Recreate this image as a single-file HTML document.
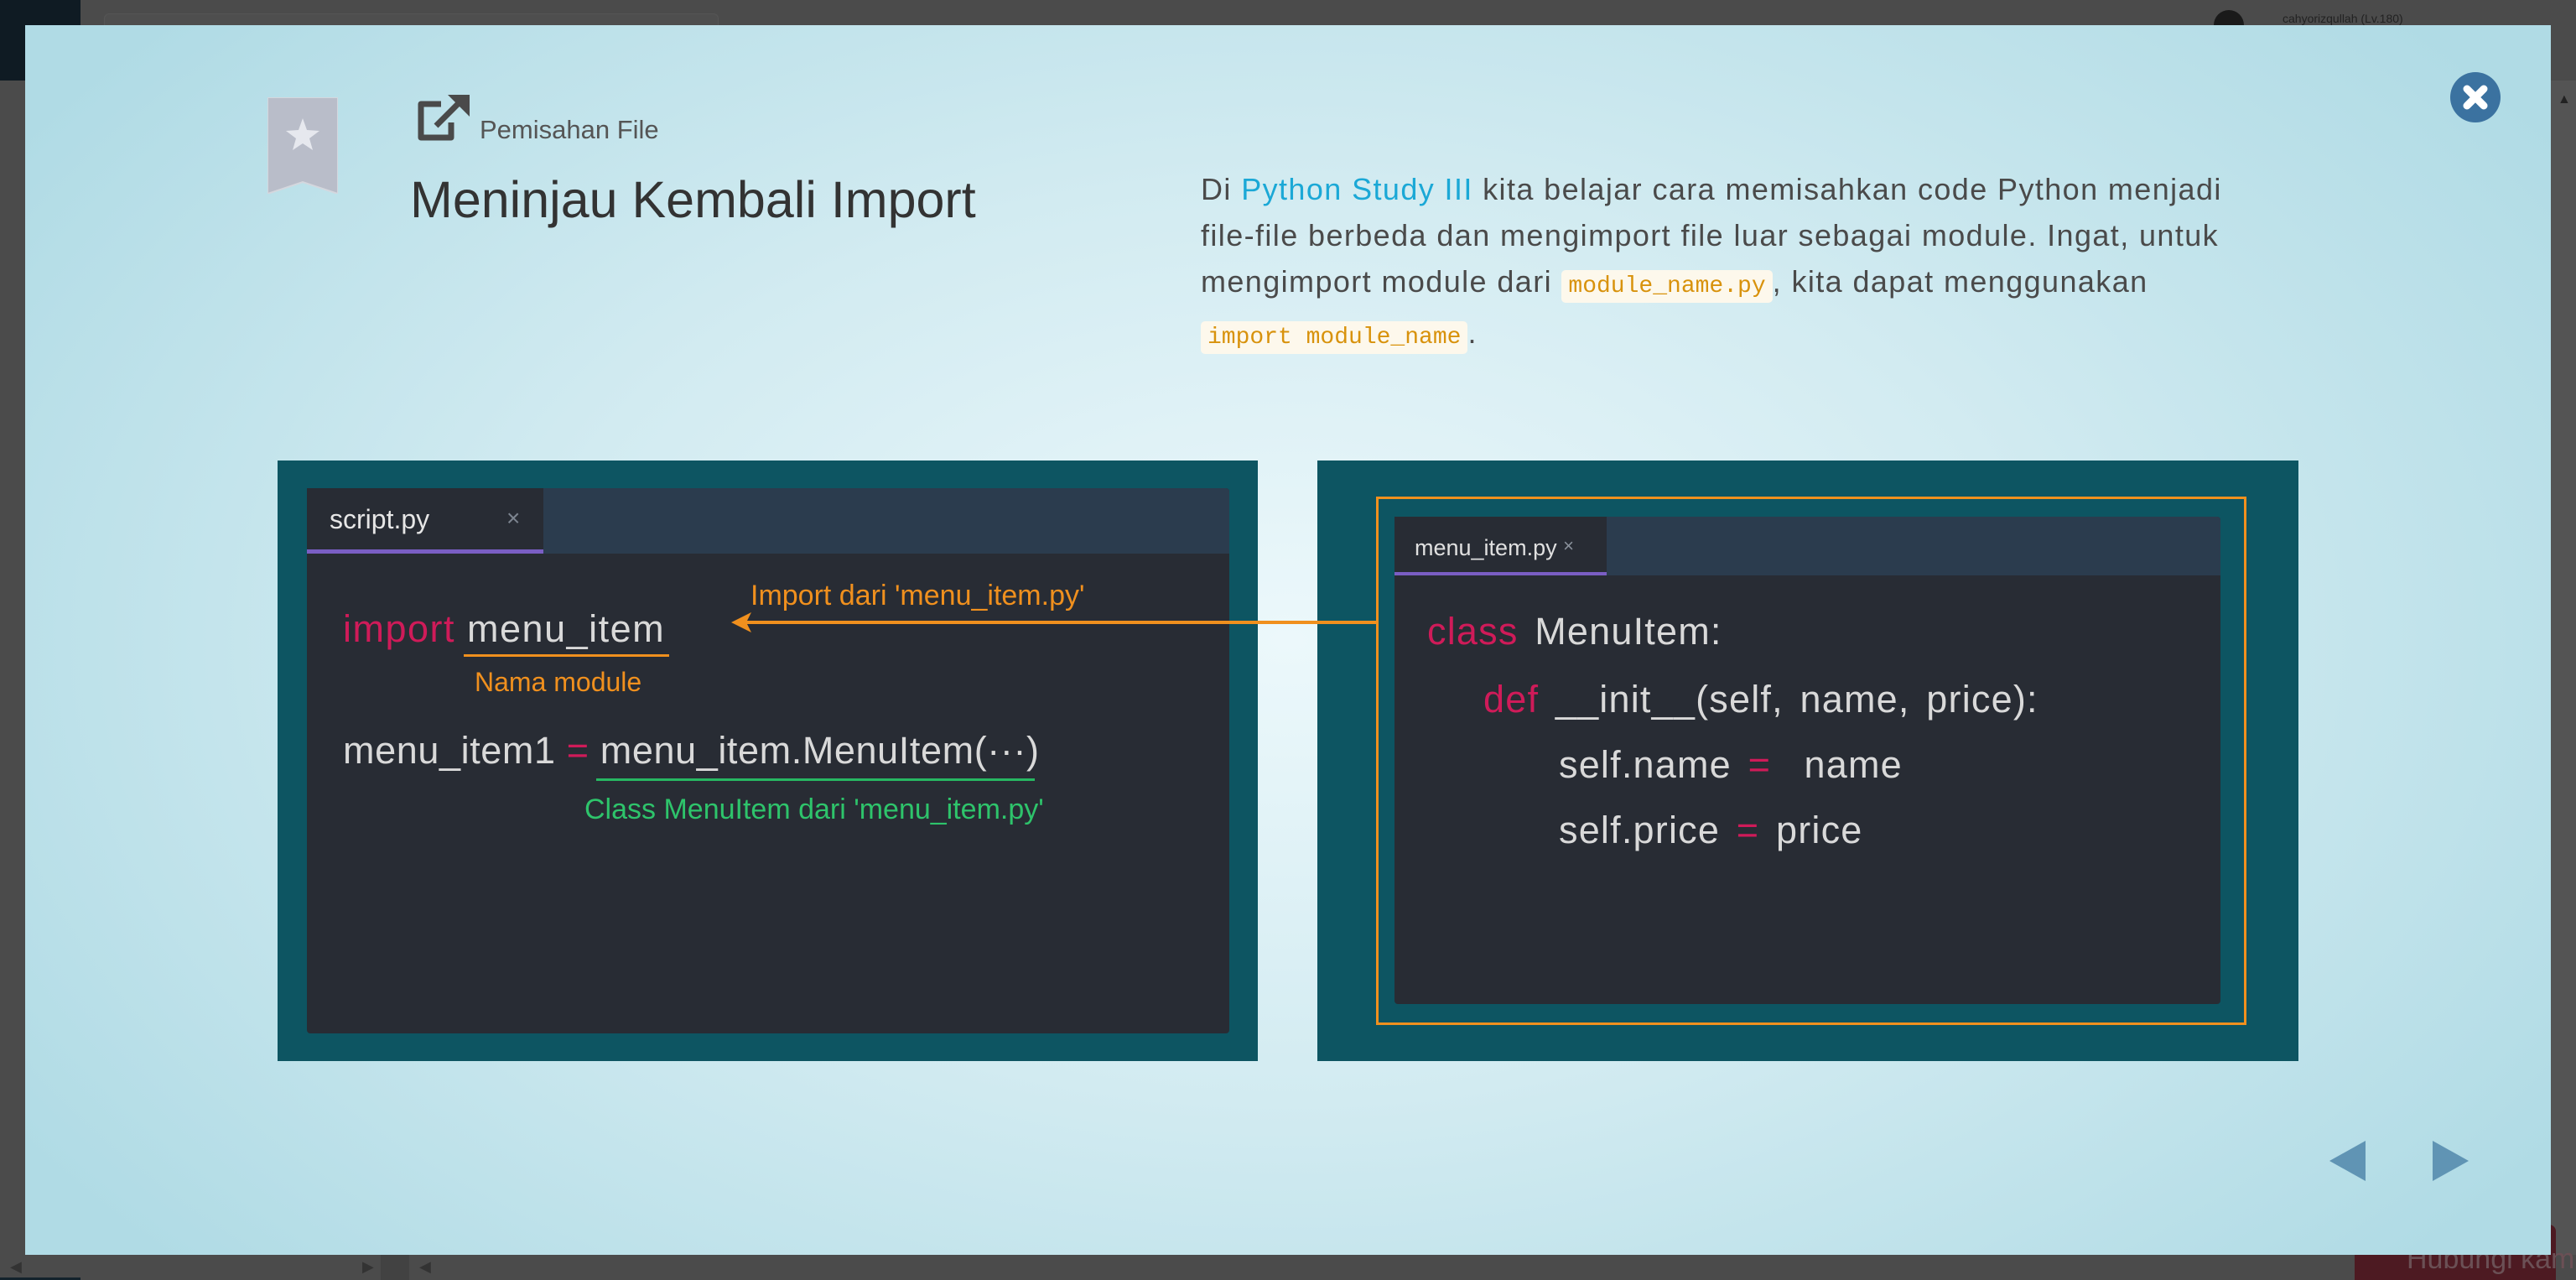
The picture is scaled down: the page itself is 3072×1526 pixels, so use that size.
<!DOCTYPE html>
<html><head><meta charset="utf-8"><style>
*{margin:0;padding:0;box-sizing:border-box}
body{width:3072px;height:1526px;background:#4b4b4b;position:relative;overflow:hidden;font-family:"Liberation Sans",sans-serif}
.a{position:absolute}
.modal{left:30px;top:30px;width:3012px;height:1466px;background:radial-gradient(ellipse 60% 75% at 50% 50%,#ecf8fb 0%,#d2ebf1 50%,#b0dbe5 100%)}
.t{position:absolute;white-space:nowrap}
.code{font-family:"Liberation Sans",sans-serif;color:#d9d9d9;font-size:45px;line-height:45px;letter-spacing:0.6px}
.code.r{font-size:45px;letter-spacing:1.2px;word-spacing:6px}
.kw{color:#cf1b59}
.ann{font-family:"Liberation Sans",sans-serif;font-size:32px;line-height:32px}
.chip{font-family:"Liberation Mono",monospace;color:#d8920c;background:#fdf8ec;border-radius:5px;padding:4px 8px;font-size:28px;letter-spacing:0}
</style></head><body>
<div class="a" style="left:0;top:0;width:96px;height:96px;background:#0f1b23"></div>
<div class="a" style="left:124px;top:16px;width:733px;height:30px;border:1px solid #555;border-radius:6px;background:#4e4e4e"></div>
<div class="a" style="left:2640px;top:12px;width:36px;height:36px;border-radius:50%;background:#1a1a1a"></div>
<div class="t" style="left:2722px;top:14px;font-size:14px;color:#222">cahyorizqullah (Lv.180)</div>
<div class="a" style="left:3042px;top:96px;width:30px;height:1400px;background:#545454"></div>
<div class="t" style="left:3050px;top:110px;font-size:16px;color:#222">▲</div>
<div class="a" style="left:2808px;top:1460px;width:240px;height:66px;background:#4d1a22;border-radius:8px 8px 0 0"></div>
<div class="t" style="left:2870px;top:1482px;font-size:34px;color:#6b5055">Hubungi kami.</div>
<div class="t" style="left:12px;top:1500px;font-size:18px;color:#333">◀</div>
<div class="t" style="left:432px;top:1500px;font-size:18px;color:#333">▶</div>
<div class="a" style="left:454px;top:1496px;width:34px;height:30px;background:#424242"></div>
<div class="t" style="left:500px;top:1500px;font-size:18px;color:#333">◀</div>
<div class="a" style="left:0;top:1523px;width:96px;height:3px;background:#13222c"></div>

<div class="a modal"></div>
<svg class="a" style="left:319px;top:116px" width="84" height="115" viewBox="0 0 84 115">
<path d="M0 0H84V115L42 101L0 115Z" fill="#b9bdc9" stroke="#d4d7de" stroke-width="2"/>
<path d="M42 25L47 39L62 40L50 49L54 63L42 55L30 63L34 49L22 40L37 39Z" fill="#e6e8ee"/>
</svg>
<svg class="a" style="left:494px;top:110px" width="70" height="60" viewBox="0 0 70 60">
<path d="M32 14H8V54H44V36" fill="none" stroke="#4a4a4a" stroke-width="7" stroke-linejoin="round"/>
<path d="M26 40L58 8" stroke="#4a4a4a" stroke-width="7"/>
<path d="M40 3H66V29Z" fill="#4a4a4a"/>
</svg>
<div class="t" style="left:572px;top:137px;font-size:31px;color:#555">Pemisahan File</div>
<div class="t" style="left:489px;top:203px;font-size:61px;color:#333">Meninjau Kembali Import</div>
<div class="a" style="left:1432px;top:198px;width:1400px;font-size:36px;line-height:55px;color:#4a4a4a;letter-spacing:1.4px">
Di <span style="color:#1ba8d6">Python Study III</span> kita belajar cara memisahkan code Python menjadi<br>file-file berbeda dan mengimport file luar sebagai module. Ingat, untuk<br>mengimport module dari <span class="chip">module_name.py</span>, kita dapat menggunakan<br><span class="chip">import module_name</span>.
</div>
<div class="a" style="left:2922px;top:86px;width:60px;height:60px;border-radius:50%;background:#3b72a0"></div>
<svg class="a" style="left:2922px;top:86px" width="60" height="60"><path d="M20 20L40 40M40 20L20 40" stroke="#fff" stroke-width="9" stroke-linecap="round"/></svg>

<div class="a" style="left:331px;top:549px;width:1169px;height:716px;background:#0d5562"></div>
<div class="a" style="left:366px;top:582px;width:1100px;height:650px;background:#282c34;border-radius:4px"></div>
<div class="a" style="left:366px;top:582px;width:1100px;height:78px;background:#2b3c4e;border-radius:4px 4px 0 0"></div>
<div class="a" style="left:366px;top:582px;width:282px;height:78px;background:#282c34"></div>
<div class="a" style="left:366px;top:655px;width:282px;height:5px;background:#7a5ec4"></div>
<div class="t" style="left:393px;top:601px;font-size:32px;color:#e6e6e6">script.py</div>
<div class="t" style="left:604px;top:602px;font-size:28px;color:#7d8590">×</div>
<div class="t code" style="left:409px;top:727px;letter-spacing:1.5px"><span class="kw">import</span> menu_item</div>
<div class="a" style="left:553px;top:780px;width:245px;height:3px;background:#f0901e"></div>
<div class="t ann" style="left:566px;top:797px;color:#f0901e">Nama module</div>
<div class="t ann" style="left:895px;top:694px;font-size:34px;color:#f0901e">Import dari 'menu_item.py'</div>
<div class="t code" style="left:409px;top:872px">menu_item1 <span class="kw">=</span> menu_item.MenuItem(···)</div>
<div class="a" style="left:711px;top:928px;width:523px;height:3px;background:#27b862"></div>
<div class="t ann" style="left:697px;top:949px;font-size:34px;color:#2ec46b">Class MenuItem dari 'menu_item.py'</div>

<div class="a" style="left:1571px;top:549px;width:1170px;height:716px;background:#0d5562"></div>
<div class="a" style="left:1641px;top:592px;width:1038px;height:630px;border:3px solid #f0901e"></div>
<div class="a" style="left:1663px;top:616px;width:985px;height:581px;background:#282c34;border-radius:4px"></div>
<div class="a" style="left:1663px;top:616px;width:985px;height:70px;background:#2b3c4e;border-radius:4px 4px 0 0"></div>
<div class="a" style="left:1663px;top:616px;width:253px;height:70px;background:#282c34"></div>
<div class="a" style="left:1663px;top:682px;width:253px;height:4px;background:#7a5ec4"></div>
<div class="t" style="left:1687px;top:638px;font-size:27px;color:#e0e0e0">menu_item.py <span style="color:#8a919b;font-size:22px;vertical-align:top">×</span></div>
<div class="t code r" style="left:1702px;top:730px"><span class="kw">class</span> MenuItem:</div>
<div class="t code r" style="left:1769px;top:811px"><span class="kw">def</span> __init__(self, name, price):</div>
<div class="t code r" style="left:1859px;top:889px">self.name <span class="kw">=</span>&nbsp; name</div>
<div class="t code r" style="left:1859px;top:967px">self.price <span class="kw">=</span> price</div>

<div class="a" style="left:888px;top:740px;width:754px;height:4px;background:#f0901e"></div>
<svg class="a" style="left:870px;top:728px" width="30" height="28"><path d="M2 14L26 2L20 14L26 26Z" fill="#f0901e"/></svg>

<svg class="a" style="left:2778px;top:1360px" width="170" height="50">
<path d="M0 24L43 0V48Z" fill="#6094b4"/>
<path d="M123 0L166 24L123 48Z" fill="#6094b4"/>
</svg>
</body></html>
